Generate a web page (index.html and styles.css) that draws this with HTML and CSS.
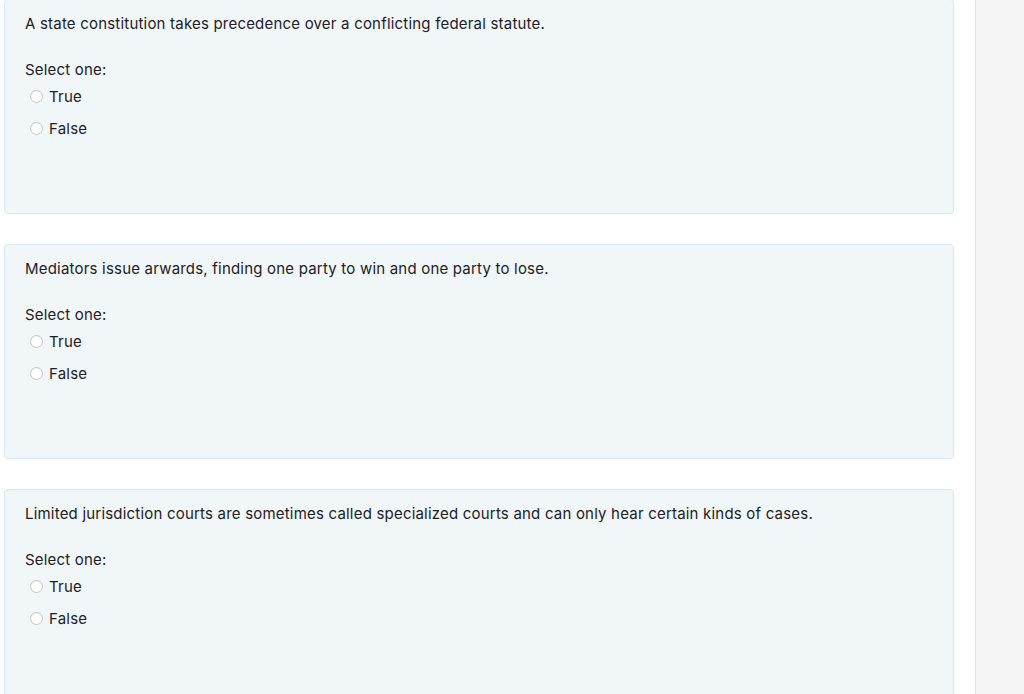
FILE: index.html
```html
<!DOCTYPE html>
<html lang="en">
<head>
<meta charset="utf-8">
<title>Quiz</title>
<link rel="stylesheet" href="styles.css">
</head>
<body>
<div class="layout">
  <main class="main">
    <section class="que">
      <div class="qtext">A state constitution takes precedence over a conflicting federal statute.</div>
      <div class="prompt">Select one:</div>
      <div class="answer">
        <label class="opt"><span class="radio"></span><span>True</span></label>
        <label class="opt"><span class="radio"></span><span>False</span></label>
      </div>
    </section>
    <section class="que">
      <div class="qtext">Mediators issue arwards, finding one party to win and one party to lose.</div>
      <div class="prompt">Select one:</div>
      <div class="answer">
        <label class="opt"><span class="radio"></span><span>True</span></label>
        <label class="opt"><span class="radio"></span><span>False</span></label>
      </div>
    </section>
    <section class="que">
      <div class="qtext">Limited jurisdiction courts are sometimes called specialized courts and can only hear certain kinds of cases.</div>
      <div class="prompt">Select one:</div>
      <div class="answer">
        <label class="opt"><span class="radio"></span><span>True</span></label>
        <label class="opt"><span class="radio"></span><span>False</span></label>
      </div>
    </section>
  </main>
  <aside class="side"></aside>
</div>
</body>
</html>
```

FILE: styles.css
```css
html, body {
  margin: 0;
  padding: 0;
  height: 100%;
  overflow: hidden;
  background: #ffffff;
}
body {
  font-family: Inter, "Liberation Sans", Arial, sans-serif;
  font-size: 15px;
  letter-spacing: 0.2px;
  color: #1d2125;
}
.layout {
  display: flex;
  height: 694px;
}
.main {
  width: 950px;
  padding-left: 4px;
  margin-right: 21px;
  margin-top: -1px;
  display: flex;
  flex-direction: column;
  gap: 30px;
}
.que {
  flex: 0 0 auto;
  box-sizing: border-box;
  height: 215px;
  background: #f1f6f9;
  border: 1px solid #d9e8ef;
  border-radius: 4px;
  padding: 13px 20px 12px;
}
.qtext {
  line-height: 22px;
  margin-bottom: 24px;
}
.prompt {
  line-height: 22px;
  margin-top: 1px;
}
.answer {
  padding-left: 5px;
  margin-top: -1px;
}
.opt {
  display: flex;
  align-items: center;
  height: 32px;
  gap: 6px;
}
.radio {
  box-sizing: border-box;
  width: 13px;
  height: 13px;
  border-radius: 50%;
  border: 1px solid #c3c7cb;
  background: #ffffff;
  box-shadow: inset 0 1px 1px rgba(0, 0, 0, 0.06);
  flex: 0 0 auto;
}
.side {
  flex: 1;
  background: #f5f5f5;
  border-left: 1px solid #e3e3e3;
}
```
